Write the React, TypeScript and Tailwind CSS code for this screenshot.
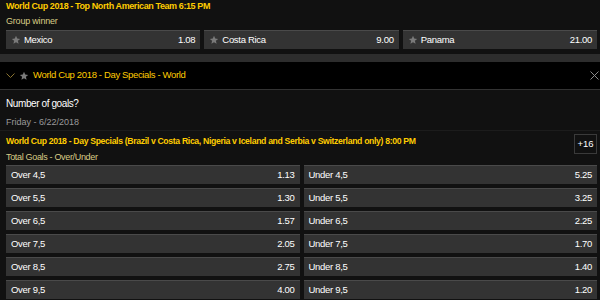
import React from 'react';

const font = { fontFamily: '"Liberation Sans", Arial, sans-serif' };

function Star() {
  return (
    <svg width="10" height="10" viewBox="0 0 24 24" className="shrink-0">
      <polygon
        points="12,2 14.9,8.6 22,9.3 16.6,14 18.2,21 12,17.3 5.8,21 7.4,14 2,9.3 9.1,8.6"
        fill="#7a7a7a"
      />
    </svg>
  );
}

function OddButton({ label, odd, star }: { label: string; odd: string; star?: boolean }) {
  return (
    <div className="flex-1 h-[19px] flex items-center justify-between bg-[#333333] border-t border-[#4a4a4a] pl-[5px] pr-[5px] text-white text-[9.5px] tracking-[-0.3px]">
      <div className="flex items-center gap-[3px]">
        {star && <Star />}
        <span>{label}</span>
      </div>
      <span>{odd}</span>
    </div>
  );
}

const goals = [
  ['Over 4,5', '1.13', 'Under 4,5', '5.25'],
  ['Over 5,5', '1.30', 'Under 5,5', '3.25'],
  ['Over 6,5', '1.57', 'Under 6,5', '2.25'],
  ['Over 7,5', '2.05', 'Under 7,5', '1.70'],
  ['Over 8,5', '2.75', 'Under 8,5', '1.40'],
  ['Over 9,5', '4.00', 'Under 9,5', '1.20'],
];

export default function App() {
  return (
    <div style={font} className="w-[600px] h-[300px] overflow-hidden bg-[#111111]">
      {/* top market */}
      <div className="pl-[6px] pr-[3px]">
        <div className="h-[13px] leading-[13px] text-[9px] tracking-[-0.4px] font-bold text-[#ffcc00]">
          World Cup 2018 - Top North American Team 6:15 PM
        </div>
        <div className="h-[17px] leading-[15px] pt-[1px] text-[9px] tracking-[-0.2px] text-[#d9cc86]">Group winner</div>
        <div className="flex gap-[4px]">
          <OddButton label="Mexico" odd="1.08" star />
          <OddButton label="Costa Rica" odd="9.00" star />
          <OddButton label="Panama" odd="21.00" star />
        </div>
      </div>

      <div className="h-[5px]" />
      <div className="h-[8px] bg-[#2d2d2d]" />

      {/* header */}
      <div className="h-[28px] bg-black border-b border-[#333333] flex items-center pl-[6px] pr-[1px]">
        <svg width="9" height="6" viewBox="0 0 9 6" className="mr-[4px]">
          <polyline points="0.5,0.5 4.5,4.5 8.5,0.5" fill="none" stroke="#8a7430" strokeWidth="1" />
        </svg>
        <Star />
        <span className="ml-[4px] text-[9.5px] tracking-[-0.35px] text-[#ffcc00]">World Cup 2018 - Day Specials - World</span>
        <div className="flex-1" />
        <svg width="9" height="9" viewBox="0 0 9 9">
          <path d="M0.5 0.5 L8.5 8.5 M8.5 0.5 L0.5 8.5" stroke="#8a8a8a" strokeWidth="1" />
        </svg>
      </div>

      <div className="pl-[6px] pr-[3px]">
        <div className="h-[14px] mt-[7px] leading-[14px] text-[10px] tracking-[-0.4px] text-white">Number of goals?</div>
        <div className="h-[16px] mt-[3px] leading-[16px] text-[9px] text-[#9a9a9a]">Friday - 6/22/2018</div>
      </div>
      <div className="h-px bg-[#1c1c1c]" />

      <div className="pl-[6px] pr-[3px]">
        <div className="flex items-start justify-between mt-[3px]">
          <div>
            <div className="h-[13px] mt-[1px] leading-[13px] text-[8.7px] tracking-[-0.35px] font-bold text-[#ffcc00]">
              World Cup 2018 - Day Specials (Brazil v Costa Rica, Nigeria v Iceland and Serbia v Switzerland only) 8:00 PM
            </div>
            <div className="h-[14px] mt-[2px] leading-[14px] text-[9px] tracking-[-0.33px] text-[#d9cc86]">Total Goals - Over/Under</div>
          </div>
          <div className="w-[23px] h-[20px] border border-[#3a3a3a] flex items-center justify-center text-[9.5px] text-white">
            +16
          </div>
        </div>
        <div className="mt-[1px] flex flex-col gap-[4px]">
          {goals.map((g) => (
            <div key={g[0]} className="flex gap-[4px]">
              <OddButton label={g[0]} odd={g[1]} />
              <OddButton label={g[2]} odd={g[3]} />
            </div>
          ))}
        </div>
      </div>
    </div>
  );
}
